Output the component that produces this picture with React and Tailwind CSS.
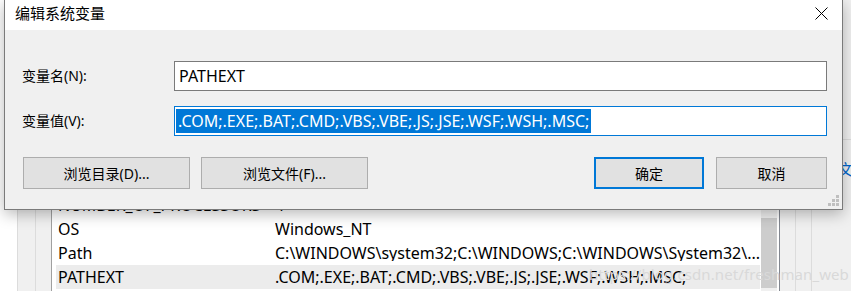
import React from "react";

const FONT = { fontFamily: '"Noto Sans", "Noto Sans CJK SC", sans-serif' };

function Row({ name, value, selected }) {
  return (
    <div className={"flex h-[24px] items-center ml-[4px] mr-[1px] " + (selected ? "bg-[#ececec]" : "")}>
      <div className="w-[219px] pl-[2px] text-[16px] leading-none text-black whitespace-nowrap">{name}</div>
      <div className="flex-1 text-[16px] leading-none text-black whitespace-nowrap overflow-hidden">{value}</div>
    </div>
  );
}

function Button({ children, w, primary }) {
  return (
    <div
      className={
        "h-[32px] flex items-center justify-center bg-[#e1e1e1] text-[14px] text-black " +
        (primary ? "border-2 border-[#0078d7]" : "border border-[#adadad]")
      }
      style={{ width: w }}
    >
      {children}
    </div>
  );
}

export default function App() {
  return (
    <div className="relative w-[851px] h-[291px] overflow-hidden bg-white" style={FONT}>
      {/* background window */}
      <div className="flex w-full h-full">
        <div className="w-[17px] bg-white"></div>
        <div className="w-[18px] bg-[#f0f0f0] border-l border-[#dcdcdc]"></div>
        <div className="w-[16px] bg-[#f0f0f0] border-l border-[#dcdcdc]"></div>
        <div className="w-[726px] bg-white border-l border-[#a0a0a0] flex">
          <div className="flex-1 flex flex-col pt-[193px]">
            <Row name="NUMBER_OF_PROCESSORS" value="4" />
            <Row name="OS" value="Windows_NT" />
            <Row name="Path" value="C:\WINDOWS\system32;C:\WINDOWS;C:\WINDOWS\System32\..." />
            <Row name="PATHEXT" value=".COM;.EXE;.BAT;.CMD;.VBS;.VBE;.JS;.JSE;.WSF;.WSH;.MSC;" selected />
          </div>
          <div className="w-[19px] bg-[#f0f0f0] flex flex-col pt-[218px]">
            <div className="h-[70px] bg-[#cdcdcd]"></div>
          </div>
        </div>
        <div className="w-[2px] bg-white"></div>
        <div className="w-[16px] bg-[#f0f0f0] border-l border-[#828790]"></div>
        <div className="w-[16px] bg-[#f0f0f0] border-l border-[#dcdcdc]"></div>
        <div className="flex-1 bg-[#f0f0f0] border-l border-[#dcdcdc] flex flex-col overflow-hidden">
          <div className="h-[139px]"></div>
          <div className="border-t border-[#dcdcdc] pt-[22px] pl-[26px] text-[15px] text-[#0066cc] leading-none whitespace-nowrap">文</div>
        </div>
      </div>

      {/* watermark */}
      <div className="absolute left-[589px] top-[267px] text-[15px] tracking-[0.1px] leading-none text-[#d9d9d9] whitespace-nowrap">
        https://blog.csdn.net/freshman_web
      </div>

      {/* dialog */}
      <div className="absolute left-[4px] top-0 w-[839px] h-[210px] bg-[#f0f0f0] border-l border-r border-b border-[#7a7a7a] shadow-[0_4px_14px_rgba(0,0,0,0.28)] flex flex-col">
        <div className="h-[30px] bg-white flex items-center justify-between pl-[10px] pr-[14px]">
          <span className="text-[15px] text-black leading-none -mt-[4px]">编辑系统变量</span>
          <svg width="13" height="13" viewBox="0 0 13 13" className="-mt-[4px]">
            <path d="M0.5 0.5 L12.5 12.5 M12.5 0.5 L0.5 12.5" stroke="#000" strokeWidth="1" />
          </svg>
        </div>
        <div className="flex flex-col pl-[17px] pr-[15px] pt-[31px]">
          <div className="flex items-center h-[30px]">
            <div className="w-[152px] text-[14px] text-black leading-none">变量名(N):</div>
            <div className="flex-1 h-[30px] bg-white border border-[#7a7a7a] flex items-center pl-[4px] text-[16px] text-black leading-none">
              PATHEXT
            </div>
          </div>
          <div className="flex items-center h-[30px] mt-[15px]">
            <div className="w-[152px] text-[14px] text-black leading-none">变量值(V):</div>
            <div className="flex-1 h-[30px] bg-white border border-[#0078d7] flex items-center pl-[1px]">
              <span className="bg-[#0078d7] text-white text-[16px] leading-[24px] h-[24px] px-[2px] whitespace-nowrap">
                .COM;.EXE;.BAT;.CMD;.VBS;.VBE;.JS;.JSE;.WSF;.WSH;.MSC;
              </span>
            </div>
          </div>
          <div className="flex items-center mt-[21px] pl-[1px]">
            <Button w={167}>浏览目录(D)...</Button>
            <div className="w-[11px]"></div>
            <Button w={167}>浏览文件(F)...</Button>
            <div className="flex-1"></div>
            <Button w={110} primary>确定</Button>
            <div className="w-[12px]"></div>
            <Button w={111}>取消</Button>
          </div>
        </div>
        <div className="flex-1 flex items-end justify-end pr-[3px] pb-[3px]">
          <svg width="11" height="11" viewBox="0 0 11 11">
            <rect x="8" y="0" width="3" height="3" fill="#bfbfbf" />
            <rect x="4" y="4" width="3" height="3" fill="#bfbfbf" />
            <rect x="8" y="4" width="3" height="3" fill="#bfbfbf" />
            <rect x="0" y="8" width="3" height="3" fill="#bfbfbf" />
            <rect x="4" y="8" width="3" height="3" fill="#bfbfbf" />
            <rect x="8" y="8" width="3" height="3" fill="#bfbfbf" />
          </svg>
        </div>
      </div>
    </div>
  );
}
